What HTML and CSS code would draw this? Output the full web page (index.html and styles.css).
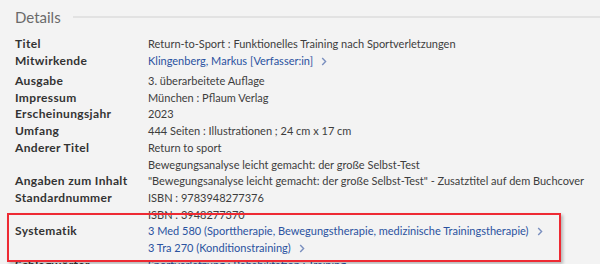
FILE: index.html
```html
<!DOCTYPE html>
<html lang="de">
<head>
<meta charset="utf-8">
<link rel="stylesheet" href="styles.css">
</head>
<body>
<section class="details">
  <header class="head">
    <h2 class="head-title">Details</h2>
    <span class="head-line"></span>
  </header>
  <dl class="rows">
    <div class="row"><dt>Titel</dt><dd><span>Return-to-Sport : Funktionelles Training nach Sportverletzungen</span></dd></div>
    <div class="row row-gap"><dt>Mitwirkende</dt><dd><a class="link">Klingenberg, Markus [Verfasser:in]<svg class="chev" viewBox="0 0 6 9" width="6" height="9"><path d="M1.2 1 L4.6 4.5 L1.2 8" fill="none" stroke="currentColor" stroke-width="1.4"/></svg></a></dd></div>
    <div class="row"><dt>Ausgabe</dt><dd><span>3. überarbeitete Auflage</span></dd></div>
    <div class="row"><dt>Impressum</dt><dd><span>München : Pflaum Verlag</span></dd></div>
    <div class="row"><dt>Erscheinungsjahr</dt><dd><span>2023</span></dd></div>
    <div class="row"><dt>Umfang</dt><dd><span>444 Seiten : Illustrationen ; 24 cm x 17 cm</span></dd></div>
    <div class="row"><dt>Anderer Titel</dt><dd><span>Return to sport</span><span>Bewegungsanalyse leicht gemacht: der große Selbst-Test</span></dd></div>
    <div class="row"><dt>Angaben zum Inhalt</dt><dd><span>"Bewegungsanalyse leicht gemacht: der große Selbst-Test" - Zusatztitel auf dem Buchcover</span></dd></div>
    <div class="row"><dt>Standardnummer</dt><dd><span>ISBN : 9783948277376</span><span>ISBN : 3948277370</span></dd></div>
    <div class="row"><dt>Systematik</dt><dd><a class="link">3 Med 580 (Sporttherapie, Bewegungstherapie, medizinische Trainingstherapie)<svg class="chev" viewBox="0 0 6 9" width="6" height="9"><path d="M1.2 1 L4.6 4.5 L1.2 8" fill="none" stroke="currentColor" stroke-width="1.4"/></svg></a><a class="link">3 Tra 270 (Konditionstraining)<svg class="chev" viewBox="0 0 6 9" width="6" height="9"><path d="M1.2 1 L4.6 4.5 L1.2 8" fill="none" stroke="currentColor" stroke-width="1.4"/></svg></a></dd></div>
    <div class="row"><dt>Schlagwörter</dt><dd><a class="link">Sportverletzung ; Rehabilitation ; Training</a></dd></div>
  </dl>
  <div class="highlight"></div>
</section>
</body>
</html>
```
FILE: styles.css
```css
html, body {
  margin: 0;
  padding: 0;
  background: #f3f3f3;
  height: 264px;
  overflow: hidden;
}
body {
  font-family: Lato, "Noto Sans", sans-serif;
  font-size: 11px;
  color: #3d3d3d;
}
.details {
  position: relative;
  padding: 0 0 0 15px;
}
.head {
  display: flex;
  align-items: center;
  height: 34px;
}
.head-title {
  margin: 0;
  font-size: 15px;
  font-weight: 400;
  color: #6a6a6a;
  line-height: 20px;
}
.head-line {
  flex: 1;
  height: 2px;
  background: #e2e2e2;
  margin-left: 12px;
  margin-top: -1px;
}
.rows {
  margin: 2px 0 0 0;
  display: flex;
  flex-direction: column;
}
.row {
  display: grid;
  grid-template-columns: 133px 1fr;
  line-height: 16.7px;
  white-space: nowrap;
}
.row-gap { margin-bottom: 3.6px; }
dt {
  font-weight: 700;
  font-size: 12px;
  letter-spacing: 0.35px;
  color: #333;
}
dd {
  margin: 0;
  display: flex;
  flex-direction: column;
  align-items: flex-start;
}
.link {
  color: #2a52a0;
  display: inline-flex;
  align-items: center;
}
.chev {
  color: #7a8fbf;
  margin-left: 8px;
}
.highlight {
  position: absolute;
  left: 7px;
  top: 213px;
  width: 554px;
  height: 49px;
  box-sizing: border-box;
  border: 2px solid #ee2a33;
  box-shadow: 2px 2px 3px rgba(0,0,0,0.25);
  pointer-events: none;
}
```
